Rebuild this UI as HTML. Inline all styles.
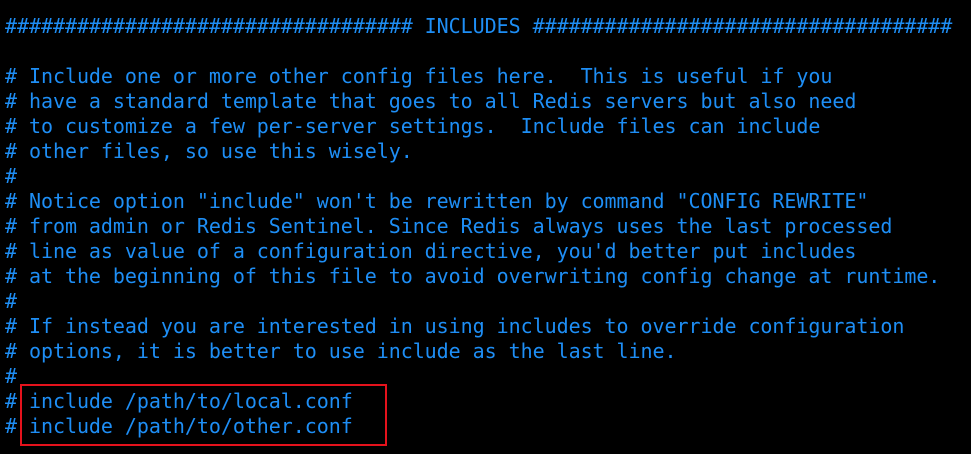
<!DOCTYPE html>
<html><head><style>
html,body{margin:0;padding:0;background:#000;width:971px;height:454px;overflow:hidden}
pre{position:absolute;left:5px;top:14px;margin:0;font-family:"DejaVu Sans Mono","Liberation Mono",monospace;font-size:20px;line-height:25px;color:#1e8ef5;letter-spacing:-0.05px}
.box{position:absolute;left:20px;top:384px;width:363px;height:58px;border:2px solid #e5121c}
</style></head><body>
<pre>################################## INCLUDES ###################################

# Include one or more other config files here.  This is useful if you
# have a standard template that goes to all Redis servers but also need
# to customize a few per-server settings.  Include files can include
# other files, so use this wisely.
#
# Notice option "include" won't be rewritten by command "CONFIG REWRITE"
# from admin or Redis Sentinel. Since Redis always uses the last processed
# line as value of a configuration directive, you'd better put includes
# at the beginning of this file to avoid overwriting config change at runtime.
#
# If instead you are interested in using includes to override configuration
# options, it is better to use include as the last line.
#
# include /path/to/local.conf
# include /path/to/other.conf</pre>
<div class="box"></div>
</body></html>
